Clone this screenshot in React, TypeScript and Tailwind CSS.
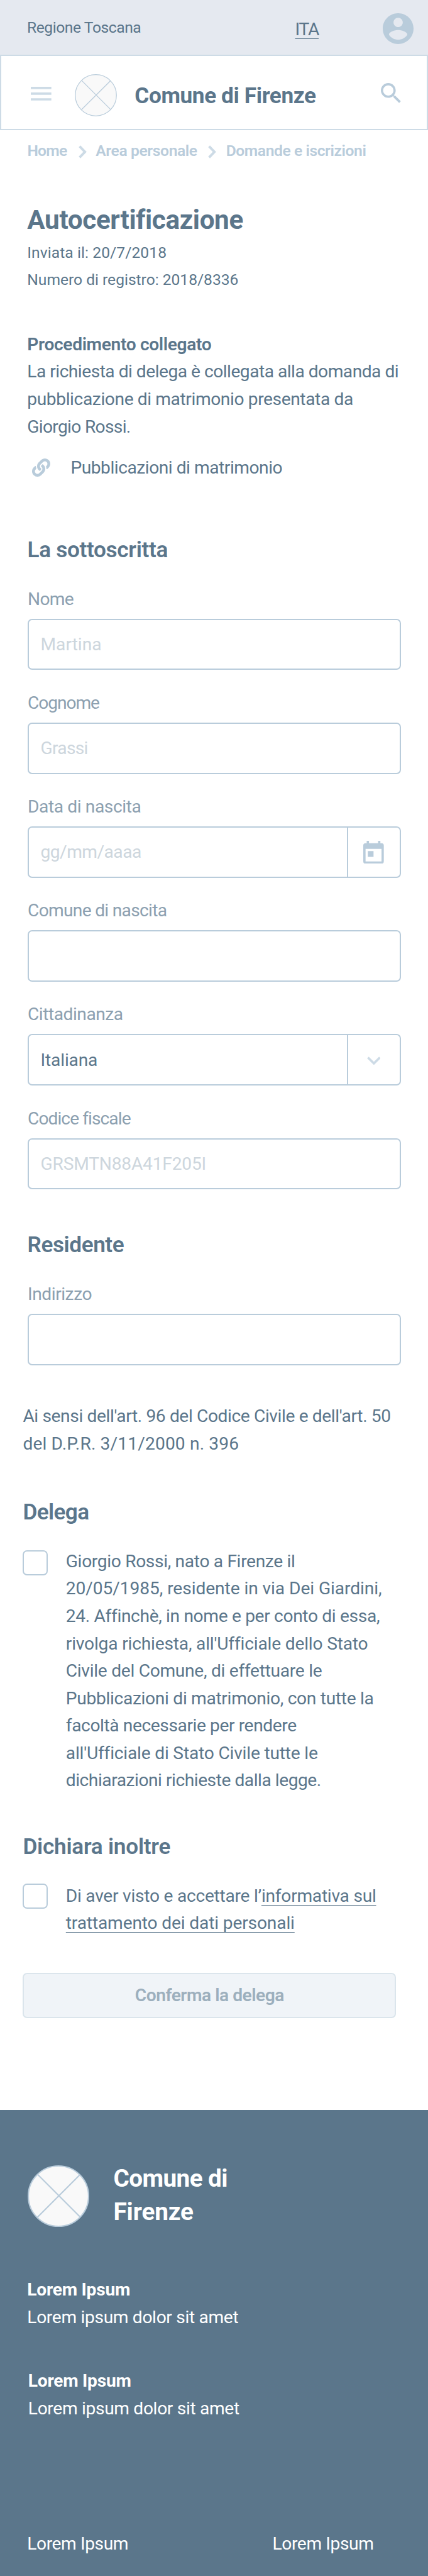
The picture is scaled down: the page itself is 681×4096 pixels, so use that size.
import type { ReactNode } from "react";
import { FaLink } from "react-icons/fa";

const BODY = "block whitespace-nowrap text-[28.16px] leading-[43.57px]";
const HEADING = "whitespace-nowrap text-[35.2px] leading-[44px] font-semibold";

function Line({ className = "", children }: { className?: string; children: ReactNode }) {
  return <span className={`${BODY} ${className}`}>{children}</span>;
}

function Emblem({ className, stroke }: { className: string; stroke: number }) {
  return (
    <svg viewBox="0 0 74 74" className={`shrink-0 ${className}`} fill="#f9f9f9" stroke="#b9ccdb" strokeWidth={stroke}>
      <circle cx="37" cy="37" r="36.2" />
      <path d="M12.2 11.2 63 62M62.6 11.6 11.6 62.4" />
    </svg>
  );
}

function Chevron({ className }: { className: string }) {
  return (
    <svg viewBox="0 0 14 23" className={`mt-[6px] h-[21px] w-[12.7px] shrink-0 ${className}`} fill="none" stroke="#cddbe6" strokeWidth="4.4">
      <path d="M1.8 1.6 11.2 11.5 1.8 21.4" />
    </svg>
  );
}

function CalendarIcon() {
  return (
    <svg viewBox="0 0 36 40" className="h-[36.3px] w-[32.7px]" fill="#b9ccdb">
      <path
        fillRule="evenodd"
        d="M6 0h4v4h16V0h4v4h2a4 4 0 0 1 4 4v28a4 4 0 0 1-4 4H4a4 4 0 0 1-4-4V8a4 4 0 0 1 4-4h2zM4 14v22h28V14zM8 18h10v10H8z"
      />
    </svg>
  );
}

function DownIcon() {
  return (
    <svg viewBox="0 0 24 15" className="mt-[2px] h-[13.6px] w-[21.8px]" fill="none" stroke="#cddbe6" strokeWidth="4">
      <path d="M1.5 1.6 12 12 22.5 1.6" />
    </svg>
  );
}

type FieldProps = {
  label: string;
  labelClass: string;
  value?: string;
  valueClass?: string;
  icon?: ReactNode;
};

function Field({ label, labelClass, value, valueClass = "", icon }: FieldProps) {
  return (
    <div>
      <div className={`pt-[0.6px] pl-[0.5px] text-[28.16px] leading-[36px] whitespace-nowrap text-[#8ca0b0] ${labelClass}`}>{label}</div>
      <div className="mt-[13.1px] flex h-[81.7px] w-[594px] rounded-[7px] border-2 border-[#b9ccdb]">
        <div className={`flex flex-1 items-center pt-[1px] pl-[19px] text-[28.16px] leading-[36px] ${valueClass}`}>{value}</div>
        {icon && <div className="flex w-[84px] items-center justify-center border-l-2 border-[#b9ccdb]">{icon}</div>}
      </div>
    </div>
  );
}

function Checkbox({ className }: { className: string }) {
  return <div className={`h-[40px] w-[40px] shrink-0 rounded-[7px] border-2 border-[#b9ccdb] ${className}`} />;
}

export default function App() {
  return (
    <div className="flex h-[4096px] w-[681px] flex-col overflow-hidden bg-white font-['Roboto',sans-serif] text-[#5b768b]">
      <div className="flex h-[87px] shrink-0 items-start bg-[#e5e9f0] pl-[43px]">
        <div className="mt-[28.5px] w-[425.5px] text-[24.64px] leading-[30px] tracking-[-0.018em]">Regione Toscana</div>
        <div className="mt-[28.7px] w-[140.8px] text-[28.16px] leading-[36px] tracking-[-0.045em]">
          <span className="ml-[1px] underline decoration-1 underline-offset-[5px]">ITA</span>
        </div>
        <svg viewBox="2 2 20 20" className="mt-[21px] h-[49px] w-[49px]" fill="#b9ccdb">
          <path d="M12 2C6.48 2 2 6.48 2 12s4.48 10 10 10 10-4.48 10-10S17.52 2 12 2zm0 3c1.66 0 3 1.34 3 3s-1.34 3-3 3-3-1.34-3-3 1.34-3 3-3zm0 14.2c-2.5 0-4.71-1.28-6-3.22.03-1.99 4-3.08 6-3.08 1.99 0 5.97 1.09 6 3.08-1.29 1.94-3.5 3.22-6 3.22z" />
        </svg>
      </div>

      <header className="flex h-[120px] shrink-0 items-start border-2 border-[#cddbe6] pl-[47px]">
        <svg viewBox="0 0 36 24" className="mt-[49px] h-[21.8px] w-[32.7px]" fill="#cddbe6">
          <path d="M0 0h36v4H0zM0 10h36v4H0zM0 20h36v4H0z" />
        </svg>
        <Emblem className="mt-[28.8px] ml-[37.3px] h-[67px] w-[67px]" stroke={1.4} />
        <div className="mt-[41px] ml-[28.3px] w-[391.8px] text-[35.2px] leading-[44px] font-bold tracking-[-0.011em] whitespace-nowrap">
          Comune di Firenze
        </div>
        <svg viewBox="3 3 17.5 17.5" className="mt-[43.3px] h-[31.8px] w-[31.8px]" fill="#b9ccdb">
          <path d="M15.5 14h-.79l-.28-.27C15.41 12.59 16 11.11 16 9.5 16 5.91 13.09 3 9.5 3S3 5.91 3 9.5 5.91 16 9.5 16c1.61 0 3.09-.59 4.23-1.57l.27.28v.79l5 4.99L20.49 19l-4.99-5zm-6 0C7.01 14 5 11.99 5 9.5S7.01 5 9.5 5 14 7.01 14 9.5 11.99 14 9.5 14z" />
        </svg>
      </header>

      <nav className="mt-[18px] flex h-[30px] shrink-0 pl-[43.4px] text-[24.64px] leading-[30px] font-semibold whitespace-nowrap text-[#b9ccdb]">
        <span className="w-[81.6px] tracking-[-0.0285em]">Home</span>
        <Chevron className="mr-[14.6px]" />
        <span className="w-[179.2px] tracking-[-0.0156em]">Area personale</span>
        <Chevron className="mr-[15.6px]" />
        <span className="tracking-[-0.0171em]">Domande e iscrizioni</span>
      </nav>

      <section className="mt-[70px] pl-[43.3px]">
        <h1 className="text-[42.24px] leading-[50px] font-bold tracking-[-0.0085em]">Autocertificazione</h1>
        <div className="mt-[5px] text-[24.64px] leading-[43.4px] whitespace-nowrap">
          <div className="tracking-[0.0026em]">Inviata il: 20/7/2018</div>
          <div className="tracking-[-0.0012em]">Numero di registro: 2018/8336</div>
        </div>
        <div className="mt-[59.1px]">
          <Line className="font-semibold tracking-[-0.0123em]">Procedimento collegato</Line>
          <Line className="tracking-[-0.0179em]">La richiesta di delega è collegata alla domanda di</Line>
          <Line className="tracking-[-0.0141em]">pubblicazione di matrimonio presentata da</Line>
          <Line className="tracking-[-0.0242em]">Giorgio Rossi.</Line>
        </div>
        <div className="mt-[21.5px] flex items-center">
          <FaLink className="ml-[7.5px] h-[29px] w-[29px] text-[#b9ccdb]" />
          <Line className="ml-[32.6px] tracking-[-0.0167em]">Pubblicazioni di matrimonio</Line>
        </div>
      </section>

      <section className="mt-[86.3px] pl-[43.5px]">
        <h2 className={`tracking-[-0.0097em] ${HEADING}`}>La sottoscritta</h2>
        <div className="mt-[38.6px] flex flex-col gap-[33.8px]">
          <Field label="Nome" labelClass="tracking-[-0.0238em]" value="Martina" valueClass="text-[#cdd6dd]" />
          <Field label="Cognome" labelClass="tracking-[-0.0382em]" value="Grassi" valueClass="text-[#cdd6dd] tracking-[-0.0245em]" />
          <Field
            label="Data di nascita"
            labelClass="tracking-[-0.0144em]"
            value="gg/mm/aaaa"
            valueClass="text-[#cdd6dd] tracking-[-0.0187em]"
            icon={<CalendarIcon />}
          />
          <Field label="Comune di nascita" labelClass="tracking-[-0.0249em]" />
          <Field
            label="Cittadinanza"
            labelClass="tracking-[-0.0168em]"
            value="Italiana"
            valueClass="tracking-[-0.0057em]"
            icon={<DownIcon />}
          />
          <Field label="Codice fiscale" labelClass="tracking-[-0.0333em]" value="GRSMTN88A41F205I" valueClass="text-[#cdd6dd] tracking-[-0.007em]" />
        </div>
      </section>

      <section className="mt-[66px] pl-[43.5px]">
        <h2 className={`tracking-[-0.0124em] ${HEADING}`}>Residente</h2>
        <div className="mt-[38.2px]">
          <Field label="Indirizzo" labelClass="tracking-[-0.016em]" />
        </div>
      </section>

      <section className="mt-[59.5px] pl-[36.4px]">
        <Line className="tracking-[-0.0139em]">Ai sensi dell'art. 96 del Codice Civile e dell'art. 50</Line>
        <Line className="tracking-[0.005em]">del D.P.R. 3/11/2000 n. 396</Line>

        <h2 className={`mt-[64.6px] tracking-[-0.0177em] ${HEADING}`}>Delega</h2>
        <div className="mt-[34.8px] flex items-start">
          <Checkbox className="mt-[4.2px]" />
          <div className="ml-[28.4px]">
            <Line className="tracking-[-0.012em]">Giorgio Rossi, nato a Firenze il</Line>
            <Line className="tracking-[-0.0029em]">20/05/1985, residente in via Dei Giardini,</Line>
            <Line className="tracking-[-0.0122em]">24. Affinchè, in nome e per conto di essa,</Line>
            <Line className="tracking-[-0.0066em]">rivolga richiesta, all'Ufficiale dello Stato</Line>
            <Line className="tracking-[-0.0103em]">Civile del Comune, di effettuare le</Line>
            <Line className="tracking-[-0.0111em]">Pubblicazioni di matrimonio, con tutte la</Line>
            <Line className="tracking-[-0.0145em]">facoltà necessarie per rendere</Line>
            <Line className="tracking-[-0.0071em]">all'Ufficiale di Stato Civile tutte le</Line>
            <Line className="tracking-[-0.0165em]">dichiarazioni richieste dalla legge.</Line>
          </div>
        </div>

        <h2 className={`mt-[61px] tracking-[-0.0071em] ${HEADING}`}>Dichiara inoltre</h2>
        <div className="mt-[34.9px] flex items-start">
          <Checkbox className="mt-[2.3px]" />
          <div className="ml-[28.4px]">
            <Line className="tracking-[-0.0092em]">
              Di aver visto e accettare l’
              <span className="underline decoration-1 underline-offset-[5px]">informativa sul</span>
            </Line>
            <Line className="tracking-[-0.0056em]">
              <span className="underline decoration-1 underline-offset-[5px]">trattamento dei dati personali</span>
            </Line>
          </div>
        </div>

        <div className="mt-[56.9px] flex h-[72.6px] w-[594px] items-center justify-center rounded-[7px] border-2 border-[#dbe5ec] bg-[#f0f4f8] text-[28.16px] leading-[36px] font-semibold tracking-[-0.0167em] text-[#9cafbd]">
          Conferma la delega
        </div>
      </section>

      <footer className="mt-[145.2px] flex-1 bg-[#5b768b] pl-[43.3px] text-white">
        <div className="flex items-start pt-[82px]">
          <Emblem className="mt-[6px] ml-[1.2px] h-[98px] w-[98px]" stroke={1.6} />
          <div className="ml-[38px] text-[38.72px] leading-[53px] font-bold">
            <div className="tracking-[-0.0153em]">Comune di</div>
            <div className="tracking-[-0.003em]">Firenze</div>
          </div>
        </div>
        <div className="mt-[76.6px]">
          <Line className="font-bold tracking-[-0.0087em]">Lorem Ipsum</Line>
          <Line className="tracking-[-0.0117em]">Lorem ipsum dolor sit amet</Line>
        </div>
        <div className="mt-[58.1px] pl-[1.5px]">
          <Line className="font-bold tracking-[-0.0087em]">Lorem Ipsum</Line>
          <Line className="tracking-[-0.0117em]">Lorem ipsum dolor sit amet</Line>
        </div>
        <div className="mt-[171.2px] flex">
          <Line className="w-[390.3px] tracking-[-0.0145em]">Lorem Ipsum</Line>
          <Line className="tracking-[-0.0145em]">Lorem Ipsum</Line>
        </div>
      </footer>
    </div>
  );
}
